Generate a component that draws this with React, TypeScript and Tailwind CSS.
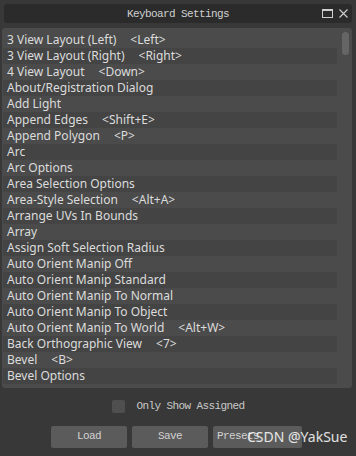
import React from "react";

interface Item {
    name: string;
    key?: string;
}

const items: Item[] = [
    { name: "3 View Layout (Left)", key: "<Left>" },
    { name: "3 View Layout (Right)", key: "<Right>" },
    { name: "4 View Layout", key: "<Down>" },
    { name: "About/Registration Dialog" },
    { name: "Add Light" },
    { name: "Append Edges", key: "<Shift+E>" },
    { name: "Append Polygon", key: "<P>" },
    { name: "Arc" },
    { name: "Arc Options" },
    { name: "Area Selection Options" },
    { name: "Area-Style Selection", key: "<Alt+A>" },
    { name: "Arrange UVs In Bounds" },
    { name: "Array" },
    { name: "Assign Soft Selection Radius" },
    { name: "Auto Orient Manip Off" },
    { name: "Auto Orient Manip Standard" },
    { name: "Auto Orient Manip To Normal" },
    { name: "Auto Orient Manip To Object" },
    { name: "Auto Orient Manip To World", key: "<Alt+W>" },
    { name: "Back Orthographic View", key: "<7>" },
    { name: "Bevel", key: "<B>" },
    { name: "Bevel Options" },
];

const mono = "font-['Liberation_Mono',monospace] text-[11px] tracking-[-0.6px]";

function App() {
    return (
        <div className="relative w-[356px] h-[456px] bg-[#383838] flex flex-col overflow-hidden">
            {/* title bar */}
            <div className="mx-[4px] mt-[4px] h-[19px] rounded-[3px] bg-[#2b2b2b] relative flex items-center justify-center">
                <span className={`${mono} text-[#d0d0d0] pt-[2px]`}>Keyboard Settings</span>
                <div className="absolute right-[4px] top-0 h-full flex items-center gap-[6px]">
                    <svg width="11" height="9" viewBox="0 0 11 9">
                        <rect x="0.5" y="0.5" width="10" height="8" fill="none" stroke="#cfcfcf" strokeWidth="1" />
                        <rect x="0" y="0" width="11" height="2" fill="#cfcfcf" />
                    </svg>
                    <svg width="9" height="9" viewBox="0 0 9 9">
                        <path d="M0.5 0.5 L8.5 8.5 M8.5 0.5 L0.5 8.5" stroke="#cfcfcf" strokeWidth="1.1" />
                    </svg>
                </div>
            </div>

            {/* list */}
            <div className="mx-[2px] mr-[4px] mt-[5px] h-[360px] rounded-[3px] bg-[#4b4b4b] flex py-[4px] pl-[1px]">
                <div className="flex-1 flex flex-col">
                    {items.map((it, i) => (
                        <div
                            key={it.name}
                            className={`h-[16px] flex items-center pl-[4px] font-['Noto_Sans',sans-serif] text-[12px] leading-none text-[#dcdcdc] whitespace-nowrap ${
                                i % 2 === 1 ? "bg-[#444444]" : ""
                            }`}
                        >
                            <span>{it.name}</span>
                            {it.key && <span className="ml-[14px]">{it.key}</span>}
                        </div>
                    ))}
                </div>
                <div className="w-[15px] flex justify-center pl-[1px]">
                    <div className="w-[7px] h-[23px] rounded-full bg-[#656565]" />
                </div>
            </div>

            {/* checkbox */}
            <div className="mt-[10px] flex items-center justify-center gap-[11px] pl-[1px]">
                <div className="w-[13px] h-[13px] rounded-[2px] bg-[#4f4f4f]" />
                <span className={`${mono} text-[#c8c8c8]`}>Only Show Assigned</span>
            </div>

            {/* buttons */}
            <div className="mt-[11px] flex gap-[5px] pl-[51px]">
                <button className={`w-[76px] h-[22px] rounded-[2px] bg-[#5b5b5b] ${mono} text-[#d2d2d2]`}>Load</button>
                <button className={`w-[76px] h-[22px] rounded-[2px] bg-[#5b5b5b] ${mono} text-[#d2d2d2]`}>Save</button>
                <button className={`w-[89px] h-[22px] rounded-[2px] bg-[#5b5b5b] ${mono} text-[#d2d2d2] text-left pl-[4px]`}>Presets</button>
            </div>

            {/* watermark */}
            <span className="absolute left-[247px] top-[426px] font-['Noto_Sans',sans-serif] text-[14px] text-white/85 whitespace-nowrap">
                CSDN @YakSue
            </span>
        </div>
    );
}

export default App;
